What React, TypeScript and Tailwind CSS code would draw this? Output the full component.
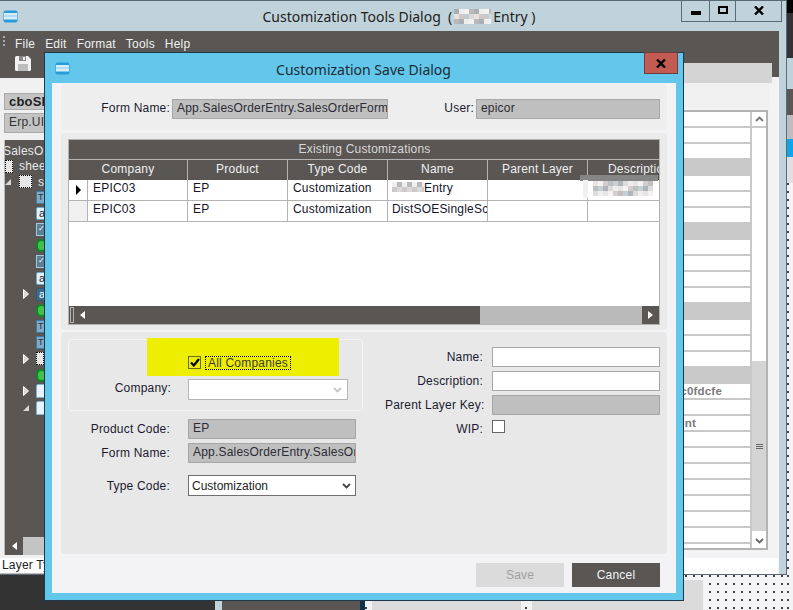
import React from "react";

const Mosaic = ({ w, h, seed = 3 }: { w: number; h: number; seed?: number }) => {
  const cells: React.ReactNode[] = [];
  const cols = ["#d9d9d9", "#b9b9b9", "#e6e2e2", "#a9aeb2", "#cfc8c8", "#eeeeee", "#c2cace", "#f3f1f1"];
  for (let y = 0; y < h; y += 5) {
    for (let x = 0; x < w; x += 5) {
      cells.push(<rect key={x + "-" + y} x={x} y={y} width={5} height={5} fill={cols[(x * 7 + y * 3 + seed * (x + 1)) % cols.length]} />);
    }
  }
  return (
    <svg width={w} height={h} className="shrink-0">
      {cells}
    </svg>
  );
};

const AppIcon = () => (
  <svg width="15" height="13" viewBox="0 0 15 13">
    <rect x="0.5" y="0.5" width="14" height="12" rx="2" fill="#2a9ad8" />
    <rect x="1" y="3" width="13" height="6.5" fill="#d5eefa" />
    <rect x="1" y="5.5" width="13" height="1" fill="#8cc8ea" />
  </svg>
);

const Chevron = ({ color = "#555", up = false }: { color?: string; up?: boolean }) => (
  <svg width="9" height="6" viewBox="0 0 9 6">
    <path d={up ? "M1 5L4.500 1.500L8 5" : "M1 1L4.500 4.500L8 1"} fill="none" stroke={color} strokeWidth="1.800" />
  </svg>
);

const GrayField = ({ children, w }: { children?: React.ReactNode; w: string }) => (
  <div className={`${w} h-5 shrink-0 bg-[#bfbfbf] border border-[#a6a6a6] pl-[4px] flex items-center text-[#2b2b35] whitespace-nowrap overflow-hidden`}>
    <span className="-mt-[2px]">{children}</span>
  </div>
);

const WhiteField = () => <div className="w-[168px] h-5 bg-white border border-[#a6a6a6]" />;

const Label = ({ children, w }: { children: React.ReactNode; w: string }) => (
  <div className={`${w} shrink-0 text-right text-[#1b1b30] whitespace-nowrap`}>{children}</div>
);

const Arrow = ({ kind }: { kind?: "right" | "down" }) =>
  kind === "right" ? (
    <svg width="6" height="10" viewBox="0 0 6 10" className="shrink-0">
      <path d="M0.500 0.500L5.500 5L0.500 9.500Z" fill="#d8d8d8" stroke="#fff" />
    </svg>
  ) : kind === "down" ? (
    <svg width="6" height="6" viewBox="0 0 6 6" className="shrink-0">
      <path d="M6 0V6H0Z" fill="#d8d8d8" />
    </svg>
  ) : (
    <span className="w-[6px] shrink-0" />
  );

type IconKind = "t" | "a" | "da" | "check" | "green" | "dot" | "page";

const TreeIcon = ({ kind }: { kind: IconKind }) => {
  if (kind === "green")
    return <div className="w-[11px] h-[13px] shrink-0 rounded-full bg-[#45c04e] border-2 border-[#0c8a1f]" />;
  if (kind === "dot")
    return <div className="w-[8px] h-[13px] shrink-0 bg-[#e6e6e6] border border-dotted border-black" />;
  if (kind === "page")
    return <div className="w-[10px] h-[14px] shrink-0 rounded-t-[2px] bg-[#e8f3fb] border border-[#7fb2d4]" />;
  if (kind === "t")
    return <div className="w-[10px] h-[13px] shrink-0 bg-[#7fa9c6] border border-[#3d7ba6] text-[9px] leading-[10px] text-[#333] pl-[1px]">T</div>;
  if (kind === "check")
    return <div className="w-[10px] h-[13px] shrink-0 bg-[#5e7f94] border border-[#a7cadb] text-[8px] leading-[10px] text-white pl-[1px]">✓</div>;
  if (kind === "da")
    return <div className="w-[10px] h-[13px] shrink-0 rounded-[2px] bg-[#3e6c88] border border-[#2f5872] text-[11px] leading-[10px] text-white pl-[2px]">a</div>;
  return <div className="w-[10px] h-[13px] shrink-0 rounded-[2px] bg-[#e4f0f8] border border-[#6ba6cd] text-[11px] leading-[10px] text-[#223] pl-[2px]">a</div>;
};

const treeRows: { kind: IconKind; arrow?: "right" | "down" }[] = [
  { kind: "t" },
  { kind: "a" },
  { kind: "check" },
  { kind: "green" },
  { kind: "check" },
  { kind: "a" },
  { kind: "da", arrow: "right" },
  { kind: "green" },
  { kind: "t" },
  { kind: "t" },
  { kind: "dot", arrow: "right" },
  { kind: "green" },
  { kind: "page", arrow: "right" },
  { kind: "page", arrow: "down" },
];

const grayRows = [3, 7, 12, 16];

export default function App() {
  return (
    <div className="relative w-[793px] h-[610px] overflow-hidden flex bg-[#f3f3f5] font-['Liberation_Sans',Arial,sans-serif] text-[12px] tracking-[0.2px]">
      {/* desktop, left part */}
      <div className="w-[787px] flex flex-col">
        {/* main window */}
        <div className="relative h-[582px] flex flex-col bg-[#c1d3da] border-t border-r border-b border-[#5b6b76]">
          <div className="h-[30px] shrink-0 relative flex items-center pl-[3px]">
            <AppIcon />
            <div className="w-[762px] flex items-center justify-center text-[14px] tracking-normal text-[#222] font-['Noto_Sans',sans-serif] whitespace-pre">
              Customization Tools Dialog&nbsp;&nbsp;(<span className="px-[2px] flex"><Mosaic w={37} h={15} /></span>Entry )
            </div>
          </div>
          {/* window controls */}
          <div className="absolute right-[4px] -top-px h-[22px] w-[101px] flex border border-[#5b6b76]">
            <div className="w-[28px] flex items-center justify-center border-r border-[#5b6b76]">
              <div className="w-[10px] h-[4px] mt-[4px] bg-black" />
            </div>
            <div className="w-[26px] flex items-center justify-center border-r border-[#5b6b76]">
              <div className="w-[10px] h-[8px] -mt-[2px] border-2 border-black" />
            </div>
            <div className="flex-1 flex items-center justify-center">
              <svg width="10" height="9" viewBox="0 0 10 9" className="-mt-[2px]">
                <path d="M1 0.500L9 8.500M9 0.500L1 8.500" stroke="#000" strokeWidth="2.400" />
              </svg>
            </div>
          </div>

          <div className="w-[779px] h-[543px] shrink-0 flex flex-col bg-[#f3f3f5]">
            {/* menu bar */}
            <div className="h-[32px] shrink-0 bg-[#595654] flex text-[#f0f0f0]">
              <div className="w-[3px] ml-[3px] mt-[5px] h-[10px] border-l-2 border-dotted border-[#aaa]" />
              <div className="pl-[9px] pt-[4px] flex gap-[10px]">
                <span>File</span>
                <span>Edit</span>
                <span>Format</span>
                <span>Tools</span>
                <span>Help</span>
              </div>
            </div>
            <div className="flex-1 flex justify-between min-h-0">
              {/* left pane */}
              <div className="w-[60px] flex flex-col">
                <div className="h-[15px] shrink-0 bg-[#595654] flex items-start">
                  <div className="ml-[15px] -mt-[7px]">
                    <svg width="16" height="15" viewBox="0 0 16 15">
                      <path d="M0 1.500Q0 0 1.500 0H13L16 3V13.500Q16 15 14.500 15H1.500Q0 15 0 13.500Z" fill="#f2f2f2" />
                      <rect x="4" y="0" width="7" height="5" fill="#8a8886" />
                      <rect x="8" y="1" width="2" height="3" fill="#f2f2f2" />
                      <rect x="3" y="8" width="10" height="7" fill="#bdbdbd" />
                    </svg>
                  </div>
                </div>
                <div className="flex-1 flex flex-col bg-[#f0f0f0] pt-[15px]">
                  <div className="ml-[4px] h-[17px] bg-[#c4c4c4] border border-[#a9a9a9] pl-[4px] font-bold text-[13px] leading-[15px] text-[#222] whitespace-nowrap overflow-hidden">cboShipTo</div>
                  <div className="ml-[4px] mt-[3px] h-[20px] bg-[#c4c4c4] border border-[#a9a9a9] pl-[4px] leading-[17px] text-[#333] whitespace-nowrap overflow-hidden">Erp.UI.App</div>
                  <div className="ml-[4px] mt-[7px] flex-1 flex flex-col bg-[#595654] border-l border-[#b9b9b9] text-[#e8e8e8] overflow-hidden">
                    <div className="h-[19px] shrink-0 -ml-[2px] pt-[2px] whitespace-nowrap">SalesOrderForm</div>
                    <div className="h-[15px] shrink-0 flex items-center gap-[6px]">
                      <TreeIcon kind="dot" />
                      <span className="-mt-[2px]">sheet</span>
                    </div>
                    <div className="h-[15px] shrink-0 flex items-center">
                      <Arrow kind="down" />
                      <div className="ml-[8px] w-[13px] h-[13px] bg-[#e6e6e6] border border-dotted border-black" />
                      <span className="ml-[6px]">s</span>
                    </div>
                    {treeRows.map((r, i) => (
                      <div key={i} className="h-[16.2px] shrink-0 flex items-center pl-[18px]">
                        <Arrow kind={r.arrow} />
                        <span className="w-[7px] shrink-0" />
                        <TreeIcon kind={r.kind} />
                      </div>
                    ))}
                    <div className="flex-1" />
                    <div className="h-[18px] shrink-0 flex">
                      <div className="w-[18px] flex items-center pl-[7px]">
                        <svg width="5" height="8" viewBox="0 0 5 8"><path d="M5 0V8L0 4Z" fill="#fff" /></svg>
                      </div>
                      <div className="flex-1 bg-[#c4c4c4]" />
                    </div>
                  </div>
                  <div className="h-[16px] mt-[3px] bg-white border-b border-[#bbb] pl-[2px] leading-[15px] text-[#222] whitespace-nowrap overflow-hidden">Layer Type</div>
                </div>
              </div>

              {/* right pane */}
              <div className="w-[103px] flex">
                <div className="w-[96px] flex flex-col">
                  <div className="h-[20px] shrink-0 bg-[#d4d4d4]" />
                  <div className="h-[25px] shrink-0 w-[93px] bg-[#f0f0f0]" />
                  <div className="mt-[2px] h-[440px] shrink-0 w-[92px] flex border-2 border-[#b3b3b3] bg-white overflow-hidden">
                    <div className="flex-1 flex flex-col min-w-0">
                      {Array.from({ length: 28 }).map((_, i) => (
                        <div
                          key={i}
                          className={`h-[16px] shrink-0 border-b-2 flex justify-start font-bold text-[11.5px] leading-[14px] text-[#7a7a7a] whitespace-nowrap ${grayRows.includes(i) ? "bg-[#c8c8c8] border-[#c8c8c8]" : "bg-white border-[#c8c8c8]"}`}
                        >
                          {i === 17 && <span className="w-[44px] flex justify-end">c0fdcfe</span>}
                          {i === 19 && <span className="w-[18px] flex justify-end">Cnt</span>}
                        </div>
                      ))}
                    </div>
                    <div className="w-[16px] shrink-0 flex flex-col border-l-2 border-[#c8c8c8] bg-white">
                      <div className="h-[16px] shrink-0 border-b-2 border-[#c8c8c8] flex items-center justify-center">
                        <Chevron color="#777" up />
                      </div>
                      <div className="h-[233px] shrink-0" />
                      <div className="h-[170px] shrink-0 bg-[#d4d4d4] flex flex-col items-center justify-center gap-[1px]">
                        <div className="w-[7px] h-[1px] bg-[#666]" />
                        <div className="w-[7px] h-[1px] bg-[#666]" />
                        <div className="w-[7px] h-[1px] bg-[#666]" />
                      </div>
                      <div className="h-[15px] mt-[2px] shrink-0 flex items-center justify-center">
                        <Chevron color="#666" />
                      </div>
                    </div>
                  </div>
                  <div className="mt-[8px] ml-[7px] h-[16px] shrink-0 bg-white flex-none w-[95px]" />
                </div>
                <div className="w-[7px] h-[14px] bg-[#595654]" />
              </div>
            </div>
          </div>
        </div>
        {/* desktop strip under the window */}
        <div className="flex-1 flex">
          <div className="w-[215px] bg-[#333333]" />
          <div className="w-[7px] bg-[#c1d3da]" />
          <div className="w-[138px] bg-[#595654]" />
          <div className="w-[5px] bg-[#10324a]" />
          <div className="flex-1 flex pl-[7px] gap-[11px] bg-[#f3f3f5] bg-[radial-gradient(circle_at_1px_1px,#333_0.7px,transparent_0.8px)] bg-[length:8px_8px]">
            <div className="mt-[5px] w-[149px] h-[40px] bg-[#dbdbdb] text-center text-[#999] pt-[5px]">Create Code</div>
            <div className="mt-[5px] w-[171px] h-[40px] bg-[#dbdbdb] text-center text-[#999] pt-[5px]">Process Scanner Save</div>
          </div>
        </div>
      </div>

      {/* strip of desktop right of the window */}
      <div className="w-[6px] flex flex-col">
        <div className="h-[13px] bg-black" />
        <div className="h-[45px] bg-[#333333]" />
        <div className="h-[31px] bg-[#c1d3da]" />
        <div className="h-[26px] bg-[#595654]" />
        <div className="h-[24px] bg-[#bdbdbd]" />
        <div className="h-[18px] bg-[#0ea5e9]" />
        <div className="h-[26px] bg-[#dfdfdf]" />
        <div className="flex-1 bg-[#f3f3f5] bg-[radial-gradient(circle_at_1px_1px,#333_0.7px,transparent_0.8px)] bg-[length:8px_8px]" />
      </div>

      {/* dialog window */}
      <div className="absolute left-[44px] top-[52px] w-[640px] h-[549px] border border-[#1c3a4c] bg-[#62c7ea] flex flex-col">
        <div className="relative h-[30px] shrink-0 flex items-center">
          <div className="ml-[10px] flex"><AppIcon /></div>
          <div className="absolute inset-x-0 top-[6px] pr-[1px] text-center text-[14px] tracking-normal text-[#1d2b33] font-['Noto_Sans',sans-serif]">Customization Save Dialog</div>
          <div className="absolute right-[5px] -top-px w-[34px] h-[22px] bg-[#c25c52] border border-[#6e3b38] flex items-center justify-center">
            <svg width="10" height="9" viewBox="0 0 10 9">
              <path d="M1 0.500L9 8.500M9 0.500L1 8.500" stroke="#000" strokeWidth="2.400" />
            </svg>
          </div>
        </div>

        <div className="mx-[7px] h-[510px] bg-[#f3f3f5] px-[9px] flex flex-col">
          {/* form name panel */}
          <div className="mt-[1px] h-[46px] shrink-0 bg-[#eeeeee] rounded-[4px] pt-[15px] pr-[7px] flex">
            <Label w="w-[109px]">Form Name:</Label>
            <div className="ml-[2px]"><GrayField w="w-[216px]">App.SalesOrderEntry.SalesOrderForm</GrayField></div>
            <div className="flex-1 text-right pr-[2px] text-[#1b1b30]">User:</div>
            <GrayField w="w-[184px]">epicor</GrayField>
          </div>

          {/* grid panel */}
          <div className="mt-[3px] h-[197px] shrink-0 bg-[#ebebeb] rounded-[4px] pt-[6px] px-[7px]">
            <div className="relative h-[186px] border border-[#b3b3b3] flex flex-col overflow-hidden bg-white whitespace-nowrap">
              <div className="h-[20px] shrink-0 bg-[#595654] border-b border-[#b3b3b3] text-[#d8d8d8] text-center leading-[19px] pl-[1px]">Existing Customizations</div>
              <div className="h-[20px] shrink-0 bg-[#595654] flex text-[#f0f0f0] text-center leading-[19px]">
                <div className="w-[119px] shrink-0 border-r border-[#b3b3b3]">Company</div>
                <div className="w-[100px] shrink-0 border-r border-[#b3b3b3]">Product</div>
                <div className="w-[100px] shrink-0 border-r border-[#b3b3b3]">Type Code</div>
                <div className="w-[100px] shrink-0 border-r border-[#b3b3b3]">Name</div>
                <div className="w-[100px] shrink-0 border-r border-[#b3b3b3]">Parent Layer</div>
                <div className="flex-1 text-left pl-[20px] overflow-hidden">Description</div>
              </div>
              <div className="h-[21px] shrink-0 flex border-b border-[#b3b3b3] text-[#15152a] leading-[16px]">
                <div className="w-[19px] shrink-0 border-r border-[#b3b3b3] flex items-center justify-center pl-[1px]">
                  <svg width="5" height="10" viewBox="0 0 5 10"><path d="M0 0L5 5L0 10Z" fill="#000" /></svg>
                </div>
                <div className="w-[100px] shrink-0 border-r border-[#b3b3b3] pl-[5px]">EPIC03</div>
                <div className="w-[100px] shrink-0 border-r border-[#b3b3b3] pl-[5px]">EP</div>
                <div className="w-[100px] shrink-0 border-r border-[#b3b3b3] pl-[5px]">Customization</div>
                <div className="w-[100px] shrink-0 border-r border-[#b3b3b3] pl-[4px] flex items-start">
                  <span className="mt-[2px] flex"><Mosaic w={32} h={10} seed={5} /></span>Entry
                </div>
                <div className="w-[100px] shrink-0 border-r border-[#b3b3b3]" />
                <div className="flex-1" />
              </div>
              <div className="h-[21px] shrink-0 flex border-b border-[#b3b3b3] text-[#15152a] leading-[16px]">
                <div className="w-[19px] shrink-0 border-r border-[#b3b3b3] bg-[#f0f0f0]" />
                <div className="w-[100px] shrink-0 border-r border-[#b3b3b3] pl-[5px]">EPIC03</div>
                <div className="w-[100px] shrink-0 border-r border-[#b3b3b3] pl-[5px]">EP</div>
                <div className="w-[100px] shrink-0 border-r border-[#b3b3b3] pl-[5px]">Customization</div>
                <div className="w-[100px] shrink-0 border-r border-[#b3b3b3] pl-[4px] overflow-hidden">DistSOESingleSc</div>
                <div className="w-[100px] shrink-0 border-r border-[#b3b3b3]" />
                <div className="flex-1" />
              </div>
              <div className="flex-1" />
              <div className="h-[18px] shrink-0 flex bg-[#595654]">
                <div className="w-[4px] my-[1px] ml-[1px] border border-[#b3b3b3]" />
                <div className="w-[406px] pl-[6px] flex items-center">
                  <svg width="5" height="8" viewBox="0 0 5 8"><path d="M5 0V8L0 4Z" fill="#fff" /></svg>
                </div>
                <div className="flex-1 bg-[#bababa]" />
                <div className="w-[17px] flex items-center justify-center">
                  <svg width="5" height="8" viewBox="0 0 5 8"><path d="M0 0V8L5 4Z" fill="#fff" /></svg>
                </div>
              </div>
              {/* redaction over the description cell */}
              <div className="absolute left-[511px] top-[35px] w-[78px] h-[6px] bg-[#858585]" />
              <div className="absolute left-[514px] top-[40px] w-[5px] h-[18px] bg-[#f0f0f0]" />
              <div className="absolute left-[524px] top-[41px] flex opacity-90"><Mosaic w={60} h={15} seed={2} /></div>
            </div>
          </div>

          {/* form panel */}
          <div className="mt-[2px] h-[222px] shrink-0 bg-[#e8e8e8] rounded-[4px] flex">
            <div className="pl-[7px] pt-[7px] w-[324px] shrink-0 flex flex-col">
              <div className="w-[295px] h-[72px] shrink-0 border border-[#f3f3f3] rounded-[3px] flex flex-col">
                <div className="ml-[78px] -mt-[2px] w-[192px] h-[38px] shrink-0 bg-[#eeee00] pl-[41px] pt-[18px] flex items-start">
                  <div className="w-[13px] h-[13px] border border-[#6b6b10] flex items-center justify-center">
                    <svg width="10" height="9" viewBox="0 0 10 9">
                      <path d="M1 4.500L3.800 7.500L9 1" fill="none" stroke="#000" strokeWidth="2.200" />
                    </svg>
                  </div>
                  <div className="ml-[4px] h-[14px] px-[2px] border border-dotted border-black leading-[12px] text-[#3a3a20] whitespace-nowrap">All Companies</div>
                </div>
                <div className="mt-[3px] flex items-start">
                  <Label w="w-[102px]">Company:</Label>
                  <div className="ml-[17px] w-[160px] h-[21px] bg-white border border-[#b5b5b5] flex items-center justify-end pr-[5px]">
                    <Chevron color="#c4c4c4" />
                  </div>
                </div>
              </div>
              <div className="mt-[8px] flex items-center">
                <Label w="w-[102px]">Product Code:</Label>
                <div className="ml-[18px]"><GrayField w="w-[168px]">EP</GrayField></div>
              </div>
              <div className="mt-[4px] flex items-center">
                <Label w="w-[102px]">Form Name:</Label>
                <div className="ml-[18px]"><GrayField w="w-[168px]">App.SalesOrderEntry.SalesOrd</GrayField></div>
              </div>
              <div className="mt-[12px] flex items-center">
                <Label w="w-[102px]">Type Code:</Label>
                <div className="ml-[18px] w-[168px] h-[21px] bg-white border border-[#707070] pl-[3px] pr-[4px] flex items-center justify-between text-[#222] tracking-normal">
                  <span>Customization</span>
                  <Chevron color="#444" />
                </div>
              </div>
            </div>
            <div className="pl-[-1px] pt-[15px] flex flex-col gap-[4px]">
              <div className="flex items-center"><Label w="w-[98px]">Name:</Label><div className="ml-[9px]"><WhiteField /></div></div>
              <div className="flex items-center"><Label w="w-[98px]">Description:</Label><div className="ml-[9px]"><WhiteField /></div></div>
              <div className="flex items-center"><Label w="w-[98px]">Parent Layer Key:</Label><div className="ml-[9px] w-[168px] h-5 bg-[#bfbfbf] border border-[#a6a6a6]" /></div>
              <div className="flex items-start"><Label w="w-[98px]"><span className="relative top-[1px]">WIP:</span></Label><div className="ml-[9px] mt-[1px] w-[13px] h-[13px] bg-white border border-[#666]" /></div>
            </div>
          </div>

          {/* footer buttons */}
          <div className="mt-[9px] pr-[7px] flex justify-end gap-[8px]">
            <div className="w-[88px] h-[24px] bg-[#dbdbdb] text-[#a0a0a0] flex items-center justify-center">Save</div>
            <div className="w-[88px] h-[24px] bg-[#595654] text-[#f4f4f4] flex items-center justify-center">Cancel</div>
          </div>
        </div>
      </div>
    </div>
  );
}
